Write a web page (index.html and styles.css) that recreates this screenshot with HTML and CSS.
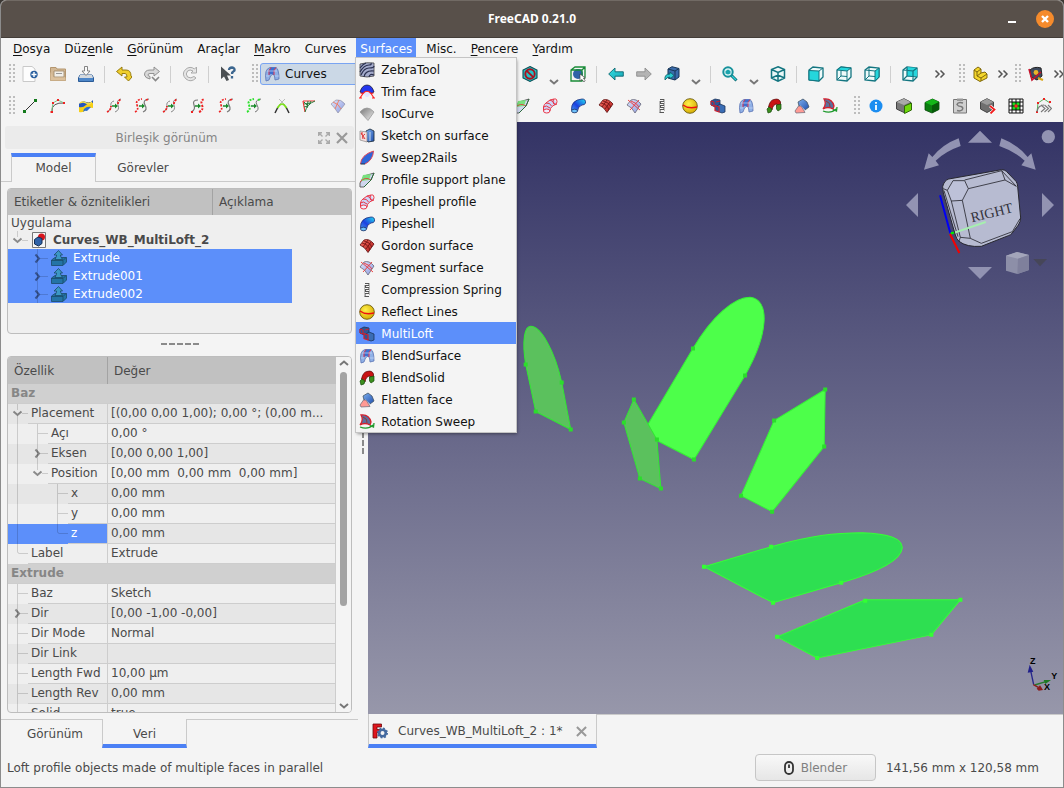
FILE: index.html
```html
<!DOCTYPE html>
<html lang="tr">
<head>
<meta charset="utf-8">
<title>FreeCAD 0.21.0</title>
<link rel="stylesheet" href="styles.css">
</head>
<body>
<svg class="sprite" aria-hidden="true">
  <defs>
    <linearGradient id="blue" x1="0" y1="0" x2="1" y2="1"><stop offset="0" stop-color="#7fb0ee"/><stop offset="1" stop-color="#1f4fae"/></linearGradient>
    <linearGradient id="pale" x1="0" y1="0" x2="1" y2="1"><stop offset="0" stop-color="#dfe6fb"/><stop offset="1" stop-color="#8c9ae0"/></linearGradient>
    <linearGradient id="vivid" x1="0" y1="1" x2="1" y2="0"><stop offset="0" stop-color="#49a8f5"/><stop offset=".45" stop-color="#1c3fe0"/><stop offset="1" stop-color="#22dff0"/></linearGradient>
    <linearGradient id="red" x1="0" y1="0" x2="1" y2="1"><stop offset="0" stop-color="#ff7468"/><stop offset="1" stop-color="#a31212"/></linearGradient>
    <linearGradient id="grey" x1="0" y1="0" x2="1" y2="1"><stop offset="0" stop-color="#777"/><stop offset="1" stop-color="#eee"/></linearGradient>
    <linearGradient id="cyan" x1="0" y1="0" x2="1" y2="1"><stop offset="0" stop-color="#34e0e2"/><stop offset="1" stop-color="#16a3b4"/></linearGradient>
    <radialGradient id="gold" cx=".4" cy=".35" r=".7"><stop offset="0" stop-color="#fff04a"/><stop offset="1" stop-color="#d4a900"/></radialGradient>

    <g id="g-v"><path class="guide-line" d="M9.5 0V20"/></g>
    <g id="g-t"><path class="guide-line" d="M9.5 0V20M10 9.500H20"/></g>
    <g id="g-l"><path class="guide-line" d="M9.500 0V7.500Q9.500 9.500 11.500 9.500H20"/></g>
    <g id="g-down"><path class="guide-line" d="M9.500 0V6M9.500 12V20M14 9.500H20"/><path class="guide-arrow" d="M5.500 7.500l4 3.500 4-3.500"/></g>
    <g id="g-root"><path class="guide-line" d="M9.500 0V6M14 9.500H20"/><path class="guide-arrow" d="M5.500 7.500l4 3.500 4-3.500"/></g>
    <g id="g-right"><path class="guide-line" d="M9.500 0V20M12 9.500H20"/><path class="guide-arrow" d="M7.500 5.500l3.500 4-3.500 4"/></g>
  </defs>

  <symbol id="i-zebra" viewBox="0 0 16 16"><path d="M1 2Q8 0 15 1V14Q8 16 1 14Z" fill="#a4abcc" stroke="#444" stroke-width=".8"/><path d="M1 6Q4 2 7 1M1 10Q5 3 10 3Q13 3 12 1M2 13Q5 6 10 6T15 4M5 15Q6 8 15 9M10 15Q11 11 15 13" fill="none" stroke="#2b3150" stroke-width="1.200"/></symbol>
  <symbol id="i-trim" viewBox="0 0 16 16"><path d="M1 8Q3 1 8 1T15 8L12 9.500Q8 5 4 9.500Z" fill="#2436ee" stroke="#112" stroke-width=".7"/><path d="M4 9.500Q8 5 12 9.500L9 13H7Z" fill="#e2e4ff"/><path d="M1 14L4 9.500Q8 5 12 9.500L15 14M4 9.500L1.500 9M12 9.500L14.500 9M0 14H3M13 14H16" fill="none" stroke="#f22" stroke-width="1.200"/></symbol>
  <symbol id="i-iso" viewBox="0 0 16 16"><path d="M1 6Q8-2 15 6L9 14.500Z" fill="url(#grey)" stroke="#999" stroke-width=".8"/></symbol>
  <symbol id="i-sketchon" viewBox="0 0 16 16"><path d="M7 3L11 1L15 3V13L9 14L7 12Z" fill="url(#blue)" stroke="#234" stroke-width=".9"/><path d="M11 4V13" stroke="#cde"/><path d="M1 3L8 4V14L1 12Z" fill="#f4dede" stroke="#888" stroke-width=".7"/><path d="M2 5L6 11M6 6Q2 8 4 11M3 4V7" fill="none" stroke="#d33"/></symbol>
  <symbol id="i-sweep2" viewBox="0 0 16 16"><path d="M1.500 14Q2 5 14.500 1Q14 10 6 14Z" fill="#2f66d8"/><path d="M1.500 14Q2 5 14.500 1M14.500 1Q14 10 6 14" fill="none" stroke="#e0485a"/><path d="M1.500 14H6" stroke="#234"/></symbol>
  <symbol id="i-support" viewBox="0 0 16 16"><path d="M1 11L5 4L15 1L12 8L5 15H1Z" fill="#cfd6ee" stroke="#555" stroke-width=".9"/><path d="M2 9L4 3L12 2L10 8Z" fill="#79e07f"/><path d="M1 10Q6 4 12 8" fill="none" stroke="#d0553f"/><path d="M15 1L12 8L5 15" fill="none" stroke="#2b6b3a"/></symbol>
  <symbol id="i-pipeprof" viewBox="0 0 16 16"><path d="M1.500 13Q1 4 12 1L15 6Q8 8 8 13Z" fill="#cdd5f8"/><path d="M1.500 9Q4 6.500 8 10M4 5Q8 4.500 9.500 8M8 2Q12 3 12.500 6.500M1.500 13V9Q2 6 4 5L8 2L12 1M8 13Q8 8 15 6" fill="none" stroke="#e93445"/><ellipse cx="4.700" cy="13" rx="3.200" ry="2" fill="#eef" stroke="#e93445"/><ellipse cx="13" cy="3.500" rx="2" ry="2.700" fill="none" stroke="#e93445"/></symbol>
  <symbol id="i-pipe" viewBox="0 0 16 16"><path d="M1.500 12Q1 2 12 1Q16 1 15.500 5Q15 7 12 7Q8 8 7.500 13Q4 16 1.500 12Z" fill="url(#vivid)" stroke="#1b2a7a" stroke-width=".8"/><ellipse cx="4.500" cy="13" rx="3" ry="1.800" fill="#6cc0fa" stroke="#125" stroke-width=".7"/></symbol>
  <symbol id="i-gordon" viewBox="0 0 16 16"><path d="M1 7L5 2Q10 0 15 6L9 14.500Q6 9 1 7Z" fill="url(#red)" stroke="#5a0a0a" stroke-width=".8"/><path d="M3 5Q9 6 11 12M5 3Q11 4 13 9M4 9L9 2M7 11L12 4" fill="none" stroke="#6b0f0f" stroke-width=".8"/></symbol>
  <symbol id="i-segment" viewBox="0 0 16 16"><path d="M1 7L5 2Q10 0 15 6L9 15Q6 9 1 7Z" fill="url(#pale)" stroke="#667" stroke-width=".8"/><path d="M2 2L14 12M4 12L13 2M5 3Q11 5 13 9" fill="none" stroke="#e33" stroke-width=".9"/></symbol>
  <symbol id="i-fan" viewBox="0 0 16 16"><path d="M1 6L6 2Q11 1 15 6L8 15Q5 10 1 6Z" fill="url(#pale)" stroke="#889" stroke-width=".6"/><path d="M3 4Q9 6 11 11M5 11L9 2" fill="none" stroke="#f0795f" stroke-width=".9"/></symbol>
  <symbol id="i-spring" viewBox="0 0 16 16"><path d="M6 1.500H10V3.500H6.500V5.500H10V7.500H6.500V9.500H10V11.500H6V14.500H10" fill="none" stroke="#555" stroke-width="1.100"/><path d="M5.500 3V14M10.500 1V13" stroke="#bbb"/></symbol>
  <symbol id="i-reflect" viewBox="0 0 16 16"><circle cx="8" cy="8" r="7.300" fill="url(#gold)" stroke="#6b5b10" stroke-width=".9"/><path d="M1 7Q6 11 15 9" fill="none" stroke="#e11" stroke-width="1.500"/></symbol>
  <symbol id="i-loft" viewBox="0 0 16 16"><path d="M1 3L5 1L10 2V7L5 9L1 7Z" fill="#2c5796" stroke="#1a335c" stroke-width=".8"/><path d="M7 8L10 6L15 8V14L12 15L7 13Z" fill="#3a6db5" stroke="#1a335c" stroke-width=".8"/><path d="M1 3L4 4V8L1 7Z" fill="#2c5796" stroke="#d0202e"/><path d="M5 7.500L9 9V14L5 12.500Z" fill="#2c5796" stroke="#d0202e" stroke-width="1.200"/><path d="M6 4L10 3" stroke="#d0202e"/></symbol>
  <symbol id="i-blend" viewBox="0 0 16 16"><path d="M2 15Q0 3 6 1.500H12Q15 3 15 13L11 14Q11 9 9 8Q6 9 5 14Z" fill="#8fb0e6" stroke="#5a74b4" stroke-width=".8"/><path d="M5 9Q4 4 7 1.500H12Q9 4 10 9Q7 7 5 9Z" fill="#3d6fd0"/><path d="M5 9Q4 4 7 1.500M10 9Q9 4 12 1.500" fill="none" stroke="#dc3550"/><path d="M3 5H13M2 10H5M11 10H15" stroke="#c8daf8" stroke-width=".7"/></symbol>
  <symbol id="i-bsolid" viewBox="0 0 16 16"><path d="M2.500 9Q4 2 8 1.500Q13 0 14.500 4V8L11 9V6Q7 6 6 12Z" fill="#c91414" stroke="#500" stroke-width=".7"/><path d="M1 11L3 9L6 11L5 14L2 15ZM10.500 7L15 6V11L12 13L10.500 11Z" fill="#3c8f1e" stroke="#154a0c" stroke-width=".7"/></symbol>
  <symbol id="i-flatten" viewBox="0 0 16 16"><path d="M4 4L9 1L13 4L15 9L11 12L5 8Z" fill="url(#blue)" stroke="#456" stroke-width=".8"/><path d="M6 7L11 12H7Z" fill="#eef"/><path d="M4.500 8L1 13L2 15L11 14.500Q9 11 7 8Z" fill="#ff9a94" stroke="#667" stroke-width=".7"/></symbol>
  <symbol id="i-rotsweep" viewBox="0 0 16 16"><path d="M2 1Q10 0 12 8L11 11Q6 8 1 11Q5 6 2 1Z" fill="#5a6f9e" stroke="#d3202e" stroke-width="1.300"/><path d="M4 3Q9 5 8 9" fill="none" stroke="#933"/><path d="M1 13Q9 16 14 11M15 9L14.500 13L11 11.500" fill="none" stroke="#1e9a2c" stroke-width="1.300"/></symbol>

  <symbol id="i-new" viewBox="0 0 16 16"><path d="M1 .500H10L13 3V15.500H1Z" fill="#fdfdfd" stroke="#c9c9c9"/><circle cx="12" cy="8.500" r="3.700" fill="#2a5f9e"/><path d="M12 6V11M9.500 8.500H14.500" stroke="#fff" stroke-width="1.400"/></symbol>
  <symbol id="i-open" viewBox="0 0 16 16"><path d="M.500 1.500H6L7 3H15.500V14.500H.500Z" fill="#d3b895" stroke="#b4966f"/><path d="M4 5H14V11H4Z" fill="#f2efe9" stroke="#9c8766" stroke-width=".8"/><path d="M6 7.500H12" stroke="#999"/><path d="M.500 14.500V6L3.500 11.500H15.500V14.500Z" fill="#dcc19d"/></symbol>
  <symbol id="i-save" viewBox="0 0 16 16"><path d="M2 9H14L15.500 12V15.500H.500V12Z" fill="#4d86c8" stroke="#2b5b97"/><path d="M2 9H14L15 12H1Z" fill="#d4d9de"/><path d="M6.500 .500H9.500V5H12L8 9.500L4 5H6.500Z" fill="#fafafa" stroke="#777" stroke-width=".9"/></symbol>
  <symbol id="i-undo" viewBox="0 0 16 16"><path d="M.500 5.500L6 1V4H10Q15 4 15 10L16 11L12.500 15L8.500 11H11Q11 7.500 9 7.500H6V10Z" fill="#f0cf2d" stroke="#8f7305" stroke-width=".9"/></symbol>
  <symbol id="i-redo" viewBox="0 0 16 16"><path d="M15.500 5.500L10 1V4H6Q.500 4 .500 9Q1 12 6 13V10.500Q4 10 4 9Q4 7.500 6 7.500H10V10Z" fill="#d9d9d9" stroke="#888" stroke-width=".9"/><path d="M8 11L11.500 14.500L15 11" fill="none" stroke="#888" stroke-width="1.600"/></symbol>
  <symbol id="i-refresh" viewBox="0 0 16 16"><path d="M14.500 1V7H9L11 5Q8 3 5.500 5Q3 8 5.500 11Q9 13 12 10.500L14 12Q9 17 4 13Q-1 8 3.500 3.500Q8-.500 12.500 3Z" fill="#e6e6e6" stroke="#aaa"/></symbol>
  <symbol id="i-help" viewBox="0 0 16 16"><path d="M1 0.500V13L4 10.500L6.500 15L9 14L7 9.500H11Z" fill="#4b4f52"/><path d="M9 4Q9 1.500 12 1.500Q15 2 14.500 4.500Q12 6 12 8M12 10V12.500" fill="none" stroke="#3c668f" stroke-width="2.300"/></symbol>

  <symbol id="i-line" viewBox="0 0 16 16"><path d="M2.500 13.500L13 3" stroke="#333"/><path d="M1 12H4V15H1ZM12 1H15V4H12Z" fill="#147a1c"/></symbol>
  <symbol id="i-poly" viewBox="0 0 16 16"><path d="M2 14Q1 4 15 5" fill="none" stroke="#555"/><path d="M1.500 14L3 5L8 2L14 5" fill="none" stroke="#7cc282"/><path d="M.500 13H3V15H.500ZM2 4H4V6H2ZM7 1H9V3H7ZM13 4H15V6H13Z" fill="#e22"/></symbol>
  <symbol id="i-extend" viewBox="0 0 16 16"><path d="M1 6Q4 3 8 4T15 3V10Q11 9 8 12T1 14Z" fill="#f6cf16"/><path d="M1 6Q4 2 8 4T15 2V5Q11 4 8 7T1 9Z" fill="#2456c0"/><path d="M2 5Q5 3 8 5T14 4" fill="none" stroke="#f9e04a" stroke-width="1.300"/><path d="M6 11Q9 8 13 9L9 13Q7 12 5 14Z" fill="#2b6fd0"/></symbol>
  <symbol id="i-join" viewBox="0 0 16 16"><path d="M1 14Q6 12 5 8T8 3M9 14Q14 12 12 7T15 1" fill="none" stroke="#888"/><path d="M1 14Q5 12 5 8M12 6Q12 3 15 1" fill="none" stroke="#e22" stroke-width="1.800" stroke-dasharray="2 1.300"/><path d="M6 7.300H9V5.500L12 8L9 10.500V8.700H6Z" fill="#1a8a2b"/></symbol>
  <symbol id="i-split" viewBox="0 0 16 16"><path d="M9 14Q14 12 11 7T15 1" fill="none" stroke="#777" stroke-width="1.200"/><path d="M1 14Q5 12 3 7T8 1M12 2L15 1" fill="none" stroke="#e22" stroke-width="1.700" stroke-dasharray="2 1.300"/><path d="M5 7.300H8V5.500L11 8L8 10.500V8.700H5Z" fill="#1a8a2b"/></symbol>
  <symbol id="i-discr" viewBox="0 0 16 16"><path d="M1 14Q6 12 4 7T8 2" fill="none" stroke="#777" stroke-width="1.200"/><path d="M9 14Q14 12 12 7T15 1M1 14H3" fill="none" stroke="#e22" stroke-width="2" stroke-dasharray="2 1.300"/><path d="M5 7.300H8V5.500L11 8L8 10.500V8.700H5Z" fill="#1a8a2b"/></symbol>
  <symbol id="i-approx" viewBox="0 0 16 16"><path d="M9 14Q14 12 11 7T15 1" fill="none" stroke="#777"/><path d="M1 14Q5 12 3 7T8 1M12 2L15 1" fill="none" stroke="#2be02b" stroke-width="2" stroke-dasharray="2 1.200"/><path d="M5 7.300H8V5.500L11 8L8 10.500V8.700H5Z" fill="#1a8a2b"/></symbol>
  <symbol id="i-blendc" viewBox="0 0 16 16"><path d="M5 1L11 7M11 1L5 7" stroke="#bbb"/><path d="M1 15Q3 11 4 9M15 15Q13 11 12 9" fill="none" stroke="#333" stroke-width="1.500"/><path d="M3.500 10Q8 2 12.500 10" fill="none" stroke="#7be01b" stroke-width="1.700"/></symbol>
  <symbol id="i-comb" viewBox="0 0 16 16"><path d="M1 3H13M1 3L3 14" stroke="#e33" fill="none" stroke-width="1.200"/><path d="M3 14Q5 6 13 3M2 6L9 5M2 9L6 8M6 3L5 10M9 3L7 7M2 4L6 8" fill="none" stroke="#2a7a3a"/></symbol>

  <symbol id="i-draw" viewBox="0 0 16 16"><path d="M8 .600L15 4V12L8 15.400L1 12V4Z" fill="#23c3c7" stroke="#0b4d54" stroke-width="1.100"/><circle cx="8" cy="8" r="4.700" fill="none" stroke="#a81220" stroke-width="1.900"/><path d="M4.800 4.800L11.200 11.200" stroke="#a81220" stroke-width="1.900"/></symbol>
  <symbol id="i-bbox" viewBox="0 0 16 16"><circle cx="8" cy="8" r="5" fill="#2f62a8"/><path d="M1 4L5 1H15V11L12 15H1ZM1 4H12V15M12 4L15 1" fill="none" stroke="#178a36" stroke-width="1.300"/><path d="M10 8V15L12 13.500L14 16L15 14.500L13.500 12H15.500Z" fill="#fff" stroke="#333" stroke-width=".6"/></symbol>
  <symbol id="i-left" viewBox="0 0 16 16"><path d="M.700 8L7 2V5.800H15.300V10.200H7V14Z" fill="url(#cyan)" stroke="#0d6770" stroke-width=".9"/></symbol>
  <symbol id="i-rightarr" viewBox="0 0 16 16"><path d="M15.300 8L9 2V5.800H.700V10.200H9V14Z" fill="#b4b4b4" stroke="#8c8c8c" stroke-width=".9"/></symbol>
  <symbol id="i-link" viewBox="0 0 16 16"><path d="M4 3L8 .700L15 2.500V11L11 14L4 12Z" fill="#3a6cab" stroke="#173557"/><path d="M4 3L11 5V14M11 5L15 2.500" fill="none" stroke="#173557"/><path d="M1 14Q0 8 6 8V6L10 9.500L6 13V11Q3 11 1 14Z" fill="#28c8cf" stroke="#0d5a62" stroke-width=".8"/></symbol>
  <symbol id="i-zoom" viewBox="0 0 16 16"><path d="M9.500 9.500L14.500 14.500" stroke="#0d6770" stroke-width="3"/><path d="M10 10L14 14" stroke="#2fd3d8" stroke-width="1.400"/><circle cx="6" cy="6" r="4.700" fill="#dff5f5" stroke="#17919b" stroke-width="2"/><path d="M6 3.500L8.500 5V7.500L6 8.500L3.500 7.500V5Z" fill="#1aa3ac"/></symbol>
  <symbol id="i-axo" viewBox="0 0 16 16"><path d="M8 .800L14.500 3.500V12L8 15.200L1.500 12V3.500ZM1.500 3.500L8 6.500L14.500 3.500M8 6.500V15.200M1.500 12L8 9L14.500 12" fill="#e9f7f7" stroke="#137580" stroke-width="1.500"/></symbol>
  <symbol id="i-front" viewBox="0 0 16 16"><path d="M1 4L5 1L15 2V11L11 15L1 14Z" fill="#eefafa" stroke="#137580" stroke-width="1.300"/><path d="M1 4.500L11 5V15L1 14Z" fill="#25d6dc" stroke="#137580"/><path d="M11 5L15 2" stroke="#137580"/></symbol>
  <symbol id="i-top" viewBox="0 0 16 16"><path d="M1 4L5 1L15 2V11L11 15L1 14Z" fill="#eefafa" stroke="#137580" stroke-width="1.300"/><path d="M1 4L5 1L15 2L11 5Z" fill="#25d6dc" stroke="#137580"/><path d="M11 5V15M5 5V10L1 14M5 10L11 10.500" fill="none" stroke="#137580"/></symbol>
  <symbol id="i-side" viewBox="0 0 16 16"><path d="M1 4L5 1L15 2V11L11 15L1 14Z" fill="#eefafa" stroke="#137580" stroke-width="1.300"/><path d="M11 5L15 2V11L11 15Z" fill="#25d6dc" stroke="#137580"/><path d="M1 4L11 5M5 1V10L1 14M5 10L11 10.500" fill="none" stroke="#137580"/></symbol>
  <symbol id="i-rear" viewBox="0 0 16 16"><path d="M1 4L5 1L15 2V11L11 15L1 14Z" fill="#eefafa" stroke="#137580" stroke-width="1.300"/><path d="M5 1L15 2V11L5 10Z" fill="#25d6dc"/><path d="M1 4L11 5V15M11 5L15 2M5 1V10L1 14M5 10L15 11" fill="none" stroke="#137580" stroke-width="1.200"/></symbol>
  <symbol id="i-part" viewBox="0 0 16 16"><path d="M2 4L6 1L9 3V7L13 6L15 8V12L8 15.500L2 12Z" fill="#f4d62b" stroke="#80680b"/><path d="M2 4L5 6V10L9 12L15 8M5 6L9 3M9 12V15M5 10L9 7" fill="none" stroke="#80680b"/></symbol>
  <symbol id="i-measure" viewBox="0 0 16 16"><path d="M2 4Q6 0 13 2L14 10L9 14L3 11Z" fill="#3d4a5e" stroke="#222"/><circle cx="8" cy="6.500" r="2.400" fill="#e9b52a"/><path d="M1 3L4 14L13 6M4 14L1 3" fill="none" stroke="#c4122b" stroke-width="1.600"/><path d="M10 12L15 14" stroke="#d9a514" stroke-width="2"/></symbol>

  <symbol id="i-info" viewBox="0 0 16 16"><circle cx="8" cy="8" r="6.500" fill="#1c8df0"/><path d="M8 7V12M8 4V5.800" stroke="#fff" stroke-width="1.800"/></symbol>
  <symbol id="i-gface" viewBox="0 0 16 16"><path d="M.500 4L8 .700L14.500 4V11L8 14.500L.500 11Z" fill="#777" stroke="#444"/><path d="M.500 4L8 .700L14.500 4L8 7Z" fill="#aaa"/><path d="M8.500 8L15.500 5V12L8.500 15.500Z" fill="#6ed80b" stroke="#2e6b05"/></symbol>
  <symbol id="i-green" viewBox="0 0 16 16"><path d="M1 4.500L8.500 1L15 4V11.500L8 15L1 12Z" fill="#0c7d10" stroke="#064509" stroke-width=".8"/><path d="M1 4.500L8.500 1L15 4L8 7.500Z" fill="#14b619"/><path d="M8 7.500L15 4V11.500L8 15Z" fill="#075a0a"/></symbol>
  <symbol id="i-clip" viewBox="0 0 16 16"><path d="M1.500 1.500H14.500V15H1.500Z" fill="#cfcfcf" stroke="#777"/><path d="M5 .500H11V3H5Z" fill="#999"/><path d="M11 5Q6 3.500 5 6.500Q6 8.500 9 8.500Q12 9.500 10 12Q8 13.500 5 12.500" fill="none" stroke="#777" stroke-width="1.500"/></symbol>
  <symbol id="i-gred" viewBox="0 0 16 16"><path d="M.500 4L7 .700L13.500 4V11L7 14.500L.500 11Z" fill="#6f6f6f" stroke="#444"/><path d="M.500 4L7 .700L13.500 4L7 7Z" fill="#9b9b9b"/><path d="M10 8L14.500 11.500L10.500 15.500" fill="none" stroke="#fff" stroke-width="3"/><path d="M10 8L14.500 11.500L10.500 15.500" fill="none" stroke="#f21d1d" stroke-width="1.800"/></symbol>
  <symbol id="i-grid" viewBox="0 0 16 16"><path d="M1 1H15V15H1Z" fill="#fff"/><path d="M4 4H12V12H4Z" fill="#19e21d"/><path d="M1 1H15V15H1ZM4 1V15M8 1V15M12 1V15M1 4H15M1 8H15M1 12H15" fill="none" stroke="#111"/><path d="M6.500 6.500H9.500V9.500H6.500Z" fill="#f22"/></symbol>
  <symbol id="i-nurbs" viewBox="0 0 16 16"><path d="M1 14L2 5L8 1L14 5" fill="none" stroke="#57b35e"/><path d="M0 13H2V15H0ZM1 4H3V6H1ZM7 0H9V2H7ZM13 3H15V5H13Z" fill="#e22"/><path d="M1 14Q2 7 8 7M5 7L9 10.500L5 14M8.500 7L12.500 10.500L8.500 14M12 7L15.500 10.500L12 14" fill="none" stroke="#777" stroke-width="1.100"/></symbol>
  <symbol id="i-doc" viewBox="0 0 16 16"><path d="M1.500 .500H14.500V15.500H1.500Z" fill="#f6f6f6" stroke="#777"/><circle cx="10.500" cy="5" r="3.500" fill="#d8151c"/><path d="M3.500 7.500L7 5L11 6.500V11.500L7.500 14L3.500 12Z" fill="#2f62a8" stroke="#132f57"/></symbol>
  <symbol id="i-extrude" viewBox="0 0 16 16"><path d="M.500 10L4 7.500H15.500V12L12 15.500H.500Z" fill="#2474a6" stroke="#1a4a68" stroke-width=".8"/><path d="M.500 10.500H12V15M12 10.500L15 7.500" fill="none" stroke="#1a4a68" stroke-width=".8"/><path d="M7.500 .500L11.500 5H9.500V6L11.500 9.500H4L5.500 6V5H3Z" fill="#3c97c4" stroke="#1a4a68" stroke-width=".8"/></symbol>
  <symbol id="i-fc" viewBox="0 0 16 16"><path d="M1 1H9.500V4H5V6.500H8V9.500H5V15H1Z" fill="#e0151c" stroke="#6b0a0e" stroke-width=".8"/><circle cx="10.500" cy="10" r="3.300" fill="none" stroke="#44699f" stroke-width="2.600"/><circle cx="10.500" cy="10" r="4.700" fill="none" stroke="#44699f" stroke-width="1.600" stroke-dasharray="1.800 1.890"/></symbol>
  <symbol id="i-caret" viewBox="0 0 10 8"><path d="M1 2L5 5.500L9 2" fill="none" stroke="#777" stroke-width="2"/></symbol>
  <symbol id="i-more" viewBox="0 0 12 10"><path d="M1.500 1.500L5 5L1.500 8.500M6.500 1.500L10 5L6.500 8.500" fill="none" stroke="#555" stroke-width="1.500"/></symbol>
  <symbol id="i-x" viewBox="0 0 12 12"><path d="M1 1L11 11M11 1L1 11" stroke="#999" stroke-width="2.200"/></symbol>
  <symbol id="i-float" viewBox="0 0 12 12"><path d="M.700 4V.700H4M8 .700H11.300V4M11.300 8V11.300H8M4 11.300H.700V8M1 1L4.500 4.500M11 1L7.500 4.500M11 11L7.500 7.500M1 11L4.500 7.500" fill="none" stroke="#aaa" stroke-width="1.400"/></symbol>
</svg>

<div class="window">
  <header class="titlebar">
    <h1>FreeCAD 0.21.0</h1>
    <div class="win-buttons">
      <button class="win-min" aria-label="Simge durumuna küçült"></button>
      <button class="win-close" aria-label="Kapat"><svg viewBox="0 0 18 18"><path d="M6 6L12 12M12 6L6 12" stroke="#fff" stroke-width="2.400"/></svg></button>
    </div>
  </header>

  <nav class="menubar">
    <button><u>D</u>osya</button>
    <button>Düz<u>e</u>nle</button>
    <button><u>G</u>örünüm</button>
    <button>Araçlar</button>
    <button><u>M</u>akro</button>
    <button>Curves</button>
    <div class="menu-host">
      <button class="open">Surfaces</button>
      <div class="menu">
        <button><svg><use href="#i-zebra"/></svg>ZebraTool</button>
        <button><svg><use href="#i-trim"/></svg>Trim face</button>
        <button><svg><use href="#i-iso"/></svg>IsoCurve</button>
        <button><svg><use href="#i-sketchon"/></svg>Sketch on surface</button>
        <button><svg><use href="#i-sweep2"/></svg>Sweep2Rails</button>
        <button><svg><use href="#i-support"/></svg>Profile support plane</button>
        <button><svg><use href="#i-pipeprof"/></svg>Pipeshell profile</button>
        <button><svg><use href="#i-pipe"/></svg>Pipeshell</button>
        <button><svg><use href="#i-gordon"/></svg>Gordon surface</button>
        <button><svg><use href="#i-segment"/></svg>Segment surface</button>
        <button><svg><use href="#i-spring"/></svg>Compression Spring</button>
        <button><svg><use href="#i-reflect"/></svg>Reflect Lines</button>
        <button class="current"><svg><use href="#i-loft"/></svg>MultiLoft</button>
        <button><svg><use href="#i-blend"/></svg>BlendSurface</button>
        <button><svg><use href="#i-bsolid"/></svg>BlendSolid</button>
        <button><svg><use href="#i-flatten"/></svg>Flatten face</button>
        <button><svg><use href="#i-rotsweep"/></svg>Rotation Sweep</button>
      </div>
    </div>
    <button>Misc.</button>
    <button><u>P</u>encere</button>
    <button><u>Y</u>ardım</button>
  </nav>

  <div class="toolbar">
    <i class="grip"></i>
    <button class="tool" aria-label="Yeni"><svg><use href="#i-new"/></svg></button>
    <button class="tool" aria-label="Aç"><svg><use href="#i-open"/></svg></button>
    <button class="tool" aria-label="Kaydet"><svg><use href="#i-save"/></svg></button>
    <i class="sep"></i>
    <button class="tool" aria-label="Geri al"><svg><use href="#i-undo"/></svg></button>
    <button class="tool" aria-label="Yinele"><svg><use href="#i-redo"/></svg></button>
    <i class="sep"></i>
    <button class="tool" aria-label="Yenile"><svg><use href="#i-refresh"/></svg></button>
    <i class="sep"></i>
    <button class="tool" aria-label="Bu nedir?"><svg><use href="#i-help"/></svg></button>
    <i class="grip"></i>
    <label class="workbench"><svg><use href="#i-blend"/></svg><select aria-label="Tezgah"><option>Curves</option></select></label>
    <button class="tool" aria-label="Çizim stili"><svg><use href="#i-draw"/></svg></button>
    <button class="drop" aria-label="Çizim stili menüsü"><svg><use href="#i-caret"/></svg></button>
    <button class="tool" aria-label="Sınırlayıcı kutu"><svg><use href="#i-bbox"/></svg></button>
    <i class="sep"></i>
    <button class="tool" aria-label="Geri"><svg><use href="#i-left"/></svg></button>
    <button class="tool" aria-label="İleri"><svg><use href="#i-rightarr"/></svg></button>
    <button class="tool" aria-label="Bağlantıya git"><svg><use href="#i-link"/></svg></button>
    <button class="drop" aria-label="Bağlantı menüsü"><svg><use href="#i-caret"/></svg></button>
    <i class="sep"></i>
    <button class="tool" aria-label="Tümünü sığdır"><svg><use href="#i-zoom"/></svg></button>
    <button class="drop" aria-label="Yakınlaştırma menüsü"><svg><use href="#i-caret"/></svg></button>
    <button class="tool" aria-label="İzometrik"><svg><use href="#i-axo"/></svg></button>
    <i class="sep"></i>
    <button class="tool" aria-label="Ön"><svg><use href="#i-front"/></svg></button>
    <button class="tool" aria-label="Üst"><svg><use href="#i-top"/></svg></button>
    <button class="tool" aria-label="Sağ"><svg><use href="#i-side"/></svg></button>
    <i class="sep"></i>
    <button class="tool" aria-label="Arka"><svg><use href="#i-rear"/></svg></button>
    <button class="more wide" aria-label="Daha fazla"><svg><use href="#i-more"/></svg></button>
    <i class="grip tight"></i>
    <button class="tool" aria-label="Parça"><svg><use href="#i-part"/></svg></button>
    <button class="more" aria-label="Daha fazla"><svg><use href="#i-more"/></svg></button>
    <i class="grip tight"></i>
    <button class="tool" aria-label="Ölç"><svg><use href="#i-measure"/></svg></button>
    <button class="more" aria-label="Daha fazla"><svg><use href="#i-more"/></svg></button>
  </div>

  <div class="toolbar">
    <i class="grip"></i>
    <button class="tool" aria-label="Line"><svg><use href="#i-line"/></svg></button>
    <button class="tool" aria-label="Editable spline"><svg><use href="#i-poly"/></svg></button>
    <button class="tool" aria-label="Extend"><svg><use href="#i-extend"/></svg></button>
    <button class="tool" aria-label="Join curves"><svg><use href="#i-join"/></svg></button>
    <button class="tool" aria-label="Split curve"><svg><use href="#i-split"/></svg></button>
    <button class="tool" aria-label="Extract"><svg><use href="#i-join"/></svg></button>
    <button class="tool" aria-label="Discretize"><svg><use href="#i-discr"/></svg></button>
    <button class="tool" aria-label="Interpolate"><svg><use href="#i-split"/></svg></button>
    <button class="tool" aria-label="Approximate"><svg><use href="#i-approx"/></svg></button>
    <button class="tool" aria-label="Blend curve"><svg><use href="#i-blendc"/></svg></button>
    <button class="tool" aria-label="Comb plot"><svg><use href="#i-comb"/></svg></button>
    <button class="tool" aria-label="Iso curves"><svg><use href="#i-fan"/></svg></button>
    <span class="hidden-tools"></span>
    <button class="tool" aria-label="Profile support plane"><svg><use href="#i-support"/></svg></button>
    <button class="tool" aria-label="Pipeshell profile"><svg><use href="#i-pipeprof"/></svg></button>
    <button class="tool" aria-label="Pipeshell"><svg><use href="#i-pipe"/></svg></button>
    <button class="tool" aria-label="Gordon surface"><svg><use href="#i-gordon"/></svg></button>
    <button class="tool" aria-label="Segment surface"><svg><use href="#i-segment"/></svg></button>
    <button class="tool" aria-label="Compression Spring"><svg><use href="#i-spring"/></svg></button>
    <button class="tool" aria-label="Reflect Lines"><svg><use href="#i-reflect"/></svg></button>
    <button class="tool" aria-label="MultiLoft"><svg><use href="#i-loft"/></svg></button>
    <button class="tool" aria-label="BlendSurface"><svg><use href="#i-blend"/></svg></button>
    <button class="tool" aria-label="BlendSolid"><svg><use href="#i-bsolid"/></svg></button>
    <button class="tool" aria-label="Flatten face"><svg><use href="#i-flatten"/></svg></button>
    <button class="tool" aria-label="Rotation Sweep"><svg><use href="#i-rotsweep"/></svg></button>
    <i class="grip"></i>
    <button class="tool" aria-label="Geometry info"><svg><use href="#i-info"/></svg></button>
    <button class="tool" aria-label="Extract subshape"><svg><use href="#i-gface"/></svg></button>
    <button class="tool" aria-label="Solid"><svg><use href="#i-green"/></svg></button>
    <button class="tool" aria-label="Paste SVG"><svg><use href="#i-clip"/></svg></button>
    <button class="tool" aria-label="Object to console"><svg><use href="#i-gred"/></svg></button>
    <button class="tool" aria-label="Adjacent faces"><svg><use href="#i-grid"/></svg></button>
    <button class="tool" aria-label="B-spline to console"><svg><use href="#i-nurbs"/></svg></button>
  </div>

  <main class="work">
    <aside class="dock">
      <div class="dock-title"><h2>Birleşik görünüm</h2>
        <button aria-label="Ayır"><svg><use href="#i-float"/></svg></button>
        <button aria-label="Kapat"><svg><use href="#i-x"/></svg></button>
      </div>
      <div class="tabs top">
        <button class="tab active">Model</button>
        <button class="tab">Görevler</button>
      </div>

      <section class="tree">
        <div class="tree-head"><span>Etiketler &amp; öznitelikleri</span><span>Açıklama</span></div>
        <p>Uygulama</p>
        <ul>
          <li class="root"><svg class="guide"><use href="#g-root"/></svg><svg class="icon"><use href="#i-doc"/></svg>Curves_WB_MultiLoft_2</li>
          <li class="selected"><i class="indent"></i><svg class="guide"><use href="#g-right"/></svg><svg class="icon"><use href="#i-extrude"/></svg>Extrude</li>
          <li class="selected"><i class="indent"></i><svg class="guide"><use href="#g-right"/></svg><svg class="icon"><use href="#i-extrude"/></svg>Extrude001</li>
          <li class="selected"><i class="indent"></i><svg class="guide"><use href="#g-right"/></svg><svg class="icon"><use href="#i-extrude"/></svg>Extrude002</li>
        </ul>
      </section>
      <div class="dashes"></div>

      <section class="props">
        <div class="props-view">
          <table>
            <thead><tr><th>Özellik</th><th>Değer</th></tr></thead>
            <tbody>
              <tr class="group"><td colspan="2">Baz</td></tr>
              <tr class="alt"><td><div class="name"><svg class="guide"><use href="#g-down"/></svg><span>Placement</span></div></td><td>[(0,00 0,00 1,00); 0,00 °; (0,00 m...</td></tr>
              <tr><td><div class="name"><svg class="guide"><use href="#g-v"/></svg><svg class="guide"><use href="#g-t"/></svg><span>Açı</span></div></td><td>0,00 °</td></tr>
              <tr class="alt"><td><div class="name"><svg class="guide"><use href="#g-v"/></svg><svg class="guide"><use href="#g-right"/></svg><span>Eksen</span></div></td><td>[0,00 0,00 1,00]</td></tr>
              <tr><td><div class="name"><svg class="guide"><use href="#g-v"/></svg><svg class="guide"><use href="#g-root"/></svg><span>Position</span></div></td><td>[0,00 mm&nbsp; 0,00 mm&nbsp; 0,00 mm]</td></tr>
              <tr class="alt"><td><div class="name"><svg class="guide"><use href="#g-v"/></svg><i class="indent"></i><svg class="guide"><use href="#g-t"/></svg><span>x</span></div></td><td>0,00 mm</td></tr>
              <tr><td><div class="name"><svg class="guide"><use href="#g-v"/></svg><i class="indent"></i><svg class="guide"><use href="#g-t"/></svg><span>y</span></div></td><td>0,00 mm</td></tr>
              <tr class="alt"><td class="picked"><div class="name"><svg class="guide"><use href="#g-v"/></svg><i class="indent"></i><svg class="guide"><use href="#g-l"/></svg><span>z</span></div></td><td>0,00 mm</td></tr>
              <tr><td><div class="name"><svg class="guide"><use href="#g-l"/></svg><span>Label</span></div></td><td>Extrude</td></tr>
              <tr class="group"><td colspan="2">Extrude</td></tr>
              <tr><td><div class="name"><svg class="guide"><use href="#g-t"/></svg><span>Baz</span></div></td><td>Sketch</td></tr>
              <tr class="alt"><td><div class="name"><svg class="guide"><use href="#g-right"/></svg><span>Dir</span></div></td><td>[0,00 -1,00 -0,00]</td></tr>
              <tr><td><div class="name"><svg class="guide"><use href="#g-t"/></svg><span>Dir Mode</span></div></td><td>Normal</td></tr>
              <tr class="alt"><td><div class="name"><svg class="guide"><use href="#g-t"/></svg><span>Dir Link</span></div></td><td></td></tr>
              <tr><td><div class="name"><svg class="guide"><use href="#g-t"/></svg><span>Length Fwd</span></div></td><td>10,00 µm</td></tr>
              <tr class="alt"><td><div class="name"><svg class="guide"><use href="#g-t"/></svg><span>Length Rev</span></div></td><td>0,00 mm</td></tr>
              <tr><td><div class="name"><svg class="guide"><use href="#g-t"/></svg><span>Solid</span></div></td><td>true</td></tr>
            </tbody>
          </table>
        </div>
        <div class="scroll">
          <svg class="flip"><use href="#i-caret"/></svg>
          <div class="track"><div class="thumb"></div></div>
          <svg><use href="#i-caret"/></svg>
        </div>
      </section>

      <div class="tabs bottom">
        <button class="tab">Görünüm</button>
        <button class="tab active">Veri</button>
      </div>
    </aside>

    <div class="splitter"></div>

    <section class="view">
      <div class="canvas">
        <svg class="scene" viewBox="368 122 695 591" preserveAspectRatio="xMidYMin slice">
          <g fill="#4dff4a" stroke="#36f236">
            <path d="M648 424L693 348C712 316 734 297 750 297C770 299 769 333 745 375L694 459L657 440Z"/>
            <path d="M825 389L774 420L741 495L772 511L824 446Z"/>
          </g>
          <g fill="#5bc15d" stroke="#33e633">
            <path d="M536 411L571 429L562 382C555 350 541 326 531 326C525 326 522 340 526 364Z"/>
            <path d="M634 399L624 422L640 478L661 488L657 439Z"/>
          </g>
          <g fill="#2edf51" stroke="#36ff36">
            <path d="M704 566L771 546C810 535 835 532 862 532C893 533 902 540 902 547C901 560 875 572 841 582L773 602Z"/>
            <path d="M777 636L865 599L960 599L931 634L817 657Z"/>
          </g>
          <path class="vertices" d="M536 411h0M571 429h0M562 382h0M526 364h0M693 348h0M745 375h0M694 459h0M657 439h0M634 399h0M624 422h0M640 478h0M661 488h0M825 389h0M774 420h0M741 495h0M772 511h0M824 446h0"/>
          <path class="vertices light" d="M704 566h0M771 546h0M841 582h0M773 602h0M777 636h0M865 600h0M960 599h0M931 634h0M817 657h0"/>
        </svg>

        <svg class="navcube" viewBox="0 6 519 504">
          <g fill="#9293b2">
            <path d="M234 68L270 32L306 68ZM234 441H306L270 477ZM84 219V291L48 255ZM456 219L492 255L456 291Z"/>
            <path d="M206 55L212 78Q166 94 137 122L147 136L102 149L116 100L127 111Q158 73 206 55ZM334 55L328 78Q374 94 404 122L394 136L437 149L424 100L413 111Q382 73 334 55Z"/>
            <circle cx="475" cy="50" r="20"/>
          </g>
          <path d="M158 200Q162 182 176 177L335 149Q344 149 349 154L378 184Q383 191 383 200L392 294Q391 306 385 315L366 340Q362 345 355 347L274 379Q230 382 207 364Q200 358 196 345L160 219Z" fill="#b7bbd1" stroke="#282830" stroke-width="3"/>
          <path d="M189 182H224L235 206L217 241L184 243L172 211Z" fill="#bdc1d8"/>
          <g fill="none" stroke="#282830" stroke-width="2.500">
            <path d="M189 182H224L235 206L217 241L184 243L172 211ZM224 180L335 152L345 180L235 206M345 180L379 199M335 152L379 199M172 211L160 206M184 243L211 352L241 355L217 241M211 352L207 364M241 355L274 370L367 335L390 296M162 212L204 350"/>
          </g>
          <path d="M150 226L181 340" stroke="#0000f5" stroke-width="6"/>
          <path d="M196 337L287 306" stroke="#a6efaf" stroke-width="6"/>
          <path d="M182 340L192 338" stroke="#00e800" stroke-width="7"/>
          <path d="M180 342L208 399" stroke="#f40000" stroke-width="6"/>
          <text class="cube-label" transform="rotate(-14 246 307)" x="246" y="307">RIGHT</text>
          <path d="M348 407L381 396L417 405V450L382 462L348 452Z" fill="#8d8fa8"/><path d="M348 407L381 396L417 405L384 416Z" fill="#a3a5ba"/><path d="M384 416L417 405V450L382 462Z" fill="#7f809c"/>
          <path d="M430 417H471L450 439Z" fill="#464658"/>
        </svg>

        <svg class="axes" viewBox="1002 400 117 120">
          <path d="M1031 492L1022 450" stroke="#26268c" stroke-width="4"/><path d="M1013 456L1019 432L1030 453Z" fill="#20208a"/>
          <path d="M1034 493L1070 482" stroke="#267a2c" stroke-width="4"/><path d="M1061 478L1083 478L1066 490Z" fill="#1e7a24"/>
          <path d="M1030 492L1045 500" stroke="#8a1c1c" stroke-width="4"/><path d="M1040 504L1050 494L1059 508L1046 510Z" fill="#8a1c1c"/>
          <text x="1020" y="429">Z</text><text x="1084" y="476">Y</text><text x="1062" y="507">X</text>
        </svg>
      </div>
      <div class="doc-tabs">
        <div class="doc-tab"><svg><use href="#i-fc"/></svg><span>Curves_WB_MultiLoft_2 : 1*</span><button aria-label="Sekmeyi kapat"><svg><use href="#i-x"/></svg></button></div>
      </div>
    </section>
  </main>

  <footer class="status">
    <p>Loft profile objects made of multiple faces in parallel</p>
    <button class="nav-style"><svg viewBox="0 0 10 14"><rect x="1" y="1" width="8" height="12" rx="4" fill="none" stroke="#333" stroke-width="1.800"/><path d="M5 3.500V7" stroke="#333" stroke-width="1.800"/></svg>Blender</button>
    <span>141,56 mm x 120,58 mm</span>
  </footer>
</div>
</body>
</html>
```

FILE: styles.css
```css
* { box-sizing: border-box; }

body {
  margin: 0;
  background: #3a3632;
  color: #4a4a4a;
  font: 12px/18px "DejaVu Sans", sans-serif;
}

button {
  padding: 0;
  border: 0;
  background: none;
  color: inherit;
  font: inherit;
}

svg { display: block; flex: none; }
.sprite { position: absolute; width: 0; height: 0; }

.window {
  display: flex;
  flex-direction: column;
  height: 100vh;
  min-height: 700px;
  border: solid #8c8c8c;
  border-width: 0 1px 1px;
  border-radius: 6px 6px 0 0;
  background: #f4f4f4;
}

/* Title bar */
.titlebar {
  display: grid;
  grid-template-columns: 1fr auto 1fr;
  align-items: center;
  height: 38px;
  flex: none;
  border-top: 1px solid #716a64;
  border-bottom: 1px solid #433d38;
  border-radius: 6px 6px 0 0;
  background: #58504a;
}
.titlebar h1 {
  grid-column: 2;
  margin: 0;
  color: #fff;
  font: bold 12px/18px "Noto Sans", sans-serif;
}
.win-buttons {
  display: flex;
  justify-content: flex-end;
  align-items: center;
  gap: 20px;
  padding-right: 9px;
}
.win-min { width: 8px; height: 8px; border-bottom: 2px solid #fff; }
.win-close { width: 18px; height: 18px; border-radius: 50%; background: #f58b2c; }

/* Menu bar */
.menubar {
  display: flex;
  gap: 6px;
  height: 20px;
  flex: none;
  padding-left: 8px;
  color: #111;
}
.menubar > button, .menu-host > button { height: 20px; padding: 2px 4px 0; }
.menubar u { text-underline-offset: 2px; }
.menu-host { position: relative; }
.menu-host .open { background: #5c8ffa; color: #fff; }
.menu {
  position: absolute;
  z-index: 5;
  top: 20px;
  left: 0;
  width: 160px;
  background: #f4f4f4;
  box-shadow: 0 0 0 1px #c4c4c4, 1px 2px 3px #0006;
}
.menu button {
  display: flex;
  align-items: center;
  gap: 6px;
  width: 100%;
  height: 22px;
  padding: 2px 0 0 3px;
  white-space: nowrap;
}
.menu svg { width: 16px; height: 16px; }
.menu .current { background: #5c8ffa; color: #fff; }

/* Toolbars */
.toolbar {
  display: flex;
  align-items: center;
  height: 32px;
  flex: none;
  padding-left: 5px;
  overflow: hidden;
}
.tool, .drop, .more { display: grid; place-items: center; flex: none; height: 28px; }
.tool { width: 28px; }
.tool svg { width: 16px; height: 16px; }
.drop { width: 20px; align-items: end; padding-bottom: 2px; }
.drop svg { width: 10px; height: 8px; }
.more { width: 18px; }
.more.wide { width: 32px; }
.more svg { width: 12px; height: 10px; }
.sep { width: 1px; height: 17px; margin: 0 5px 0 4px; flex: none; background: #cfcfcf; }
.grip {
  width: 6px;
  height: 20px;
  margin: 0 1px 0 3px;
  flex: none;
  background: conic-gradient(#bdbdbd 25%, transparent 0) -2px 0 / 4px 4px;
}
.tool + .grip { margin: 0 2px 0 10px; }
.more + .grip.tight { margin: 0 1px 0 3px; }
.workbench {
  display: flex;
  align-items: center;
  gap: 5px;
  width: 256px;
  height: 22px;
  flex: none;
  padding-left: 3px;
  border: 1px solid #79a4f2;
  border-radius: 3px;
  background: #cbd8e6;
}
.workbench svg { width: 16px; height: 16px; }
.workbench select {
  appearance: none;
  flex: 1;
  padding: 0;
  border: 0;
  background: none;
  color: #111;
  font: inherit;
}
.hidden-tools { width: 156px; flex: none; }

/* Work area */
.work { display: flex; flex: 1; min-height: 0; }
.dock { display: flex; flex-direction: column; width: 357px; flex: none; }
.dock-title {
  display: flex;
  align-items: center;
  gap: 6px;
  height: 23px;
  flex: none;
  margin: 4px 4px 4px;
  padding: 0 6px 0 16px;
  border-radius: 3px;
  background: #ebebeb;
}
.dock-title h2 { flex: 1; margin: 0; color: #858585; font: inherit; text-align: center; }
.dock-title svg { width: 12px; height: 12px; }

.tabs { display: flex; height: 29px; flex: none; }
.tabs::before, .tabs::after { content: ""; border: 0 solid #cacaca; }
.tabs::after { flex: 1; }
.tab { border: 0 solid #cacaca; }
.tabs.top::before { width: 10px; }
.top::before, .top::after, .top .tab { border-bottom-width: 1px; }
.top .tab { width: 94px; padding-top: 2px; }
.top .active { width: 85px; padding: 0 0 3px; border-width: 4px 1px 0; border-top-color: #4b80f5; }
.bottom::before, .bottom::after, .bottom .tab { border-top-width: 1px; }
.bottom .tab { width: 101px; padding-left: 7px; }
.bottom .active { width: 85px; padding: 4px 0 0; border-width: 0 1px 4px; border-bottom-color: #4b80f5; }

.tree, .props {
  margin: 0 6px;
  overflow: hidden;
  border: 1px solid #bdbdbd;
  border-radius: 4px;
  background: #efefef;
}
.tree { height: 146px; flex: none; margin-top: 6px; }
.tree-head { display: flex; height: 26px; background: #c1c1c1; line-height: 26px; }
.tree-head span { flex: 1; padding-left: 6px; }
.tree-head span:first-child { flex: 0 0 205px; border-right: 1px solid #a3a3a3; }
.tree p { height: 16px; margin: 0; padding-left: 3px; line-height: 16px; }
.tree ul { margin: 0; padding: 0; list-style: none; }
.tree li { display: flex; height: 18px; align-items: center; line-height: 18px; }
.tree .root { font-weight: bold; }
.tree .icon { width: 16px; height: 16px; margin: 0 6px 0 3px; }
.tree .selected { width: 284px; background: #5c8ffa; color: #fff; }

.guide { width: 20px; height: 100%; overflow: hidden; }
.guide-line { fill: none; stroke: #000; stroke-opacity: .15; }
.guide-arrow { fill: none; stroke: #000; stroke-opacity: .42; stroke-width: 2; }
.indent { width: 20px; flex: none; }

.dashes {
  width: 38px;
  height: 2px;
  flex: none;
  margin: 9px auto 11px;
  background: repeating-linear-gradient(90deg, #8a8a8a 0 6px, transparent 6px 8px);
}

.props { display: flex; flex: 1; min-height: 0; margin-bottom: 6px; }
.props-view { flex: 1; min-width: 0; overflow: hidden; }
.props table { width: 100%; border-collapse: separate; border-spacing: 0; table-layout: fixed; }
.props th { height: 27px; padding: 0 6px; background: #c1c1c1; font-weight: normal; text-align: left; }
.props th:first-child { width: 100px; border-right: 1px solid #a3a3a3; }
.props td {
  height: 20px;
  padding: 0 3px;
  overflow: hidden;
  border: 0 solid #cdcdcd;
  border-width: 0 1px 1px 0;
  line-height: 19px;
  white-space: nowrap;
}
.props tr:not(.group) td:first-child { padding: 0; border-bottom: 0; }
.props .group td { background: #d0d0d0; color: #868686; font-weight: bold; }
.alt { background: #e6e6e6; }
.name { display: flex; height: 20px; }
.name span { flex: 1; padding-left: 3px; border-bottom: 1px solid #cdcdcd; }
.picked { background: #5c8ffa; color: #fff; }

.scroll {
  display: flex;
  flex-direction: column;
  align-items: center;
  gap: 5px;
  width: 15px;
  padding: 2px 0;
  background: #f4f4f4;
}
.scroll svg { width: 10px; height: 8px; }
.flip { transform: rotate(180deg); }
.track { flex: 1; }
.thumb { width: 7px; height: 72%; border-radius: 4px; background: #a3a3a3; }

.splitter {
  width: 10px;
  flex: none;
  background: repeating-linear-gradient(#8a8a8a 0 6px, transparent 6px 8px) 4px 50% / 2px 38px no-repeat;
}

/* 3D view */
.view { display: flex; flex: 1; flex-direction: column; min-width: 0; }
.canvas {
  position: relative;
  flex: 1;
  overflow: hidden;
  background: linear-gradient(#333365, #9797aa);
}
.scene { width: 100%; height: 100%; }
.vertices { fill: none; stroke: #2bdd2b; stroke-width: 4; stroke-linecap: square; }
.vertices.light { stroke: #33ff33; }
.navcube { position: absolute; top: 0; right: 0; width: 173px; height: 168px; }
.cube-label { fill: #33333c; font: 42px "Liberation Serif", serif; }
.axes { position: absolute; right: 0; bottom: 20px; width: 39px; height: 40px; }
.axes text { fill: #000; font: bold 27px "Liberation Sans", sans-serif; }

.doc-tabs { display: flex; height: 34px; flex: none; }
.doc-tabs::after { content: ""; flex: 1; border-top: 1px solid #cacaca; }
.doc-tab {
  display: flex;
  align-items: center;
  width: 229px;
  padding: 4px 9px 0 3px;
  border: solid #cacaca;
  border-width: 0 1px 4px;
  border-bottom-color: #4b80f5;
}
.doc-tab > svg { width: 16px; height: 16px; }
.doc-tab span { flex: 1; padding-left: 10px; }
.doc-tab button svg { width: 11px; height: 11px; }

/* Status bar */
.status { display: flex; align-items: center; height: 39px; flex: none; padding: 0 24px 0 6px; }
.status p { flex: 1; margin: 0; }
.nav-style {
  display: flex;
  align-items: center;
  justify-content: center;
  gap: 7px;
  width: 121px;
  height: 27px;
  margin-right: 10px;
  border: 1px solid #c6c6c6;
  border-radius: 4px;
  background: linear-gradient(#f8f8f8, #e6e6e6);
  color: #808080;
}
.nav-style svg { width: 10px; height: 14px; }
```
